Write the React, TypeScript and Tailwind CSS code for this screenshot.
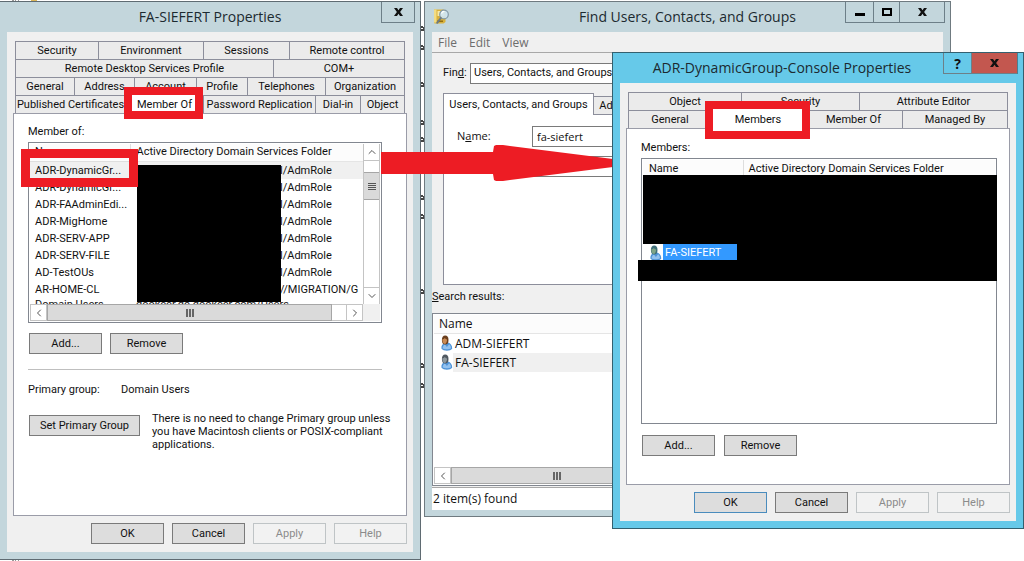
import type { ReactNode } from "react";
import clsx from "clsx";
import { ChevronDown, ChevronLeft, ChevronRight, ChevronUp } from "lucide-react";

const ui = "font-['Roboto','Liberation_Sans',sans-serif] text-[11px]";
const segoe = "font-['Open_Sans','Noto_Sans',sans-serif]";

function CloseGlyph() {
  return (
    <svg width="9" height="8" viewBox="0 0 9 8" aria-hidden="true">
      <path d="M0 0h3l1.5 2.2L6 0h3L6.1 4 9 8H6L4.5 5.8 3 8H0l2.9-4z" fill="#111" />
    </svg>
  );
}

type WindowProps = {
  title: string;
  place: string;
  frame: string;
  lead: ReactNode;
  controls: ReactNode;
  children: ReactNode;
};

function Window({ title, place, frame, lead, controls, children }: WindowProps) {
  return (
    <section aria-label={title} className={clsx("absolute isolate flex flex-col border", frame, place)}>
      <header className="flex h-[30px] items-start">
        {lead}
        <h2 className={clsx(segoe, "flex-1 truncate text-center text-[14px] leading-[30px] text-[#1c2a30]")}>{title}</h2>
        {controls}
      </header>
      <div className="mx-[7px] mb-[7px] flex flex-1 flex-col bg-[#f0f0f0]">{children}</div>
    </section>
  );
}

function Caption({ label, className, children }: { label: string; className: string; children: ReactNode }) {
  return (
    <button aria-label={label} className={clsx("flex h-[21px] items-center justify-center border-b border-l border-[#6d7f88]", className)}>
      {children}
    </button>
  );
}

type Tab = { label: string; width: string; active?: boolean };

function TabRow({ tabs }: { tabs: Tab[] }) {
  return (
    <div className="flex h-[18px] border-r border-[#8c8e9b]">
      {tabs.map((t) => (
        <button
          key={t.label}
          role="tab"
          aria-selected={!!t.active}
          className={clsx(
            "border-l border-t border-[#8c8e9b] text-center leading-[17px] whitespace-nowrap",
            t.width,
            t.active ? "z-10 -mt-0.5 h-[21px] bg-white" : "h-full bg-[#ebebeb]",
          )}
        >
          {t.label}
        </button>
      ))}
    </div>
  );
}

function Button({ children, wide, disabled, primary }: { children: string; wide?: boolean; disabled?: boolean; primary?: boolean }) {
  return (
    <button
      disabled={disabled}
      className={clsx(
        "h-[21px] border text-center leading-[19px]",
        wide ? "w-[111px]" : "w-[73px]",
        disabled ? "border-[#bfc4c6] bg-[#f2f2f2] text-[#8b8b8b]" : primary ? "border-[#4a8cbd] bg-[#dddddd]" : "border-[#7a7a7a] bg-[#dddddd]",
      )}
    >
      {children}
    </button>
  );
}

function DialogButtons({ primary }: { primary?: boolean }) {
  return (
    <div className="mt-[7px] flex justify-end gap-2 pr-1.5">
      <Button primary={primary}>OK</Button>
      <Button>Cancel</Button>
      <Button disabled>Apply</Button>
      <Button disabled>Help</Button>
    </div>
  );
}

function HScroll({ end, thumb }: { end?: boolean; thumb: string }) {
  return (
    <div className="flex h-[17px] bg-white">
      <button aria-label="Scroll left" className="flex w-[17px] items-center justify-center border border-[#c4c4c4] bg-white">
        <ChevronLeft size={12} className="text-[#555]" />
      </button>
      <div className={clsx("flex items-center justify-center gap-px border border-[#a6a6a6] bg-[#dadada]", thumb)}>
        <i className="h-2 w-0.5 bg-[#666]" />
        <i className="h-2 w-0.5 bg-[#666]" />
        <i className="h-2 w-0.5 bg-[#666]" />
      </div>
      <div className="flex-1 border-y border-[#c4c4c4]" />
      <button aria-label="Scroll right" className="flex w-[17px] items-center justify-center border border-[#c4c4c4] bg-white">
        <ChevronRight size={12} className="text-[#555]" />
      </button>
      {end && <div className="w-[17px] bg-[#f0f0f0]" />}
    </div>
  );
}

function UserIcon({ hair, face }: { hair: string; face: string }) {
  return (
    <svg width="13" height="16" viewBox="0 0 13 16" aria-hidden="true" className="shrink-0">
      <path d="M1.500 13.800C1 11 2.400 9 4.200 8.300L8 7.600c2.600.8 4.400 3 4.200 6.200-1 1.300-3 1.900-5.300 1.900s-4.400-.6-5.400-1.900z" fill="#4f94d8" />
      <path d="M2.600 13.300c.2-2 1-3.300 2.300-3.900l2 2.600 2.200-2.800c1.200.8 1.900 2.200 1.900 4.100-2 1.300-6.400 1.400-8.400 0z" fill="#92c1ef" />
      <ellipse cx="5.200" cy="5" rx="3.300" ry="4.500" fill={hair} />
      <path d="M2.300 4.200c.8.2 1.800-.2 2.500-1.200.6.900 1.400 1.400 2.200 1.600.2 1.900-.7 4.300-2.200 4.300S2.200 6.400 2.300 4.200z" fill={face} />
    </svg>
  );
}

function FinderIcon() {
  return (
    <svg width="17" height="17" viewBox="0 0 17 17" aria-hidden="true" className="mt-1.5">
      <path d="M1 1.500h9.500l2 1V14l-2 1.500H1.500L1 14z" fill="#d9b13c" />
      <path d="M1 1.500h2.500v13H1z" fill="#f3dc83" />
      <path d="M4.500 3h7v5h-7z" fill="#f7e9a8" />
      <path d="M4 12.500h6v1.500H4z" fill="#8f6d14" />
      <circle cx="11" cy="6.500" r="4.300" fill="#cfe6f2" fillOpacity=".9" stroke="#8499a5" strokeWidth="1.200" />
      <path d="M8.500 5.500a2.800 2.800 0 0 1 3-2" stroke="#fff" strokeWidth="1.200" fill="none" />
      <path d="M7.800 10L4.200 14.800" stroke="#6d7b84" strokeWidth="2" strokeLinecap="round" />
    </svg>
  );
}

const groups: [string, string][] = [
  ["ADR-DynamicGr...", "l/AdmRole"],
  ["ADR-DynamicGr...", "l/AdmRole"],
  ["ADR-FAAdminEdi...", "l/AdmRole"],
  ["ADR-MigHome", "l/AdmRole"],
  ["ADR-SERV-APP", "l/AdmRole"],
  ["ADR-SERV-FILE", "l/AdmRole"],
  ["AD-TestOUs", "l/AdmRole"],
  ["AR-HOME-CL", "//MIGRATION/G"],
];

function UserProperties() {
  return (
    <Window
      title="FA-SIEFERT Properties"
      place="-left-px top-px h-[559px] w-[422px]"
      frame="border-[#5f6b72] bg-[#c3d6dc]"
      lead={<div className="w-[39px]" />}
      controls={
        <Caption label="Close" className="mr-[5px] w-[34px] border-r">
          <CloseGlyph />
        </Caption>
      }
    >
      <div className={clsx(ui, "flex flex-1 flex-col")}>
        <div role="tablist" className="mx-2 mt-[9px]">
          <TabRow
            tabs={[
              { label: "Security", width: "w-[83px]" },
              { label: "Environment", width: "w-[105px]" },
              { label: "Sessions", width: "w-[86px]" },
              { label: "Remote control", width: "flex-1" },
            ]}
          />
          <TabRow
            tabs={[
              { label: "Remote Desktop Services Profile", width: "w-[258px]" },
              { label: "COM+", width: "flex-1" },
            ]}
          />
          <TabRow
            tabs={[
              { label: "General", width: "w-[59px]" },
              { label: "Address", width: "w-[60px]" },
              { label: "Account", width: "w-[62px]" },
              { label: "Profile", width: "w-[51px]" },
              { label: "Telephones", width: "w-[78px]" },
              { label: "Organization", width: "flex-1" },
            ]}
          />
          <TabRow
            tabs={[
              { label: "Published Certificates", width: "w-[110px]" },
              { label: "Member Of", width: "w-[78px]", active: true },
              { label: "Password Replication", width: "w-[112px]" },
              { label: "Dial-in", width: "w-[45px]" },
              { label: "Object", width: "flex-1" },
            ]}
          />
        </div>
        <div className="mx-1.5 flex h-[403px] flex-col border border-[#9a9ca8] bg-white pl-3.5 pr-6">
          <p className="mt-2.5 mb-0.5 leading-[16px]">Member of:</p>
          <div className="relative flex h-[181px] flex-col border border-[#828790] p-px">
            <div className="flex min-h-0 flex-1">
              <div className="min-w-0 flex-1 overflow-hidden">
                <table className="w-full table-fixed border-collapse text-left">
                  <thead>
                    <tr className="h-[17px] bg-[#fcfcfc] leading-[16px]">
                      <th className="w-[100px] border-r border-b border-[#dedede] p-0 pl-[5px] font-normal">Name</th>
                      <th className="overflow-hidden border-b border-[#e5e5e5] p-0 pl-1.5 font-normal whitespace-nowrap">Active Directory Domain Services Folder</th>
                    </tr>
                  </thead>
                  <tbody>
                    {groups.map(([name, folder], i) => (
                      <tr key={i} className={clsx("h-[17px] leading-[17px]", i === 0 && "bg-[#f0f0f0]")}>
                        <td className="p-0 pl-[5px] whitespace-nowrap">{name}</td>
                        <td className="overflow-hidden p-0 pl-[150px] whitespace-nowrap">{folder}</td>
                      </tr>
                    ))}
                    <tr className="h-[17px] leading-[14px]">
                      <td className="p-0 pl-[5px] align-top">Domain Users</td>
                      <td className="p-0 pl-1.5 align-top whitespace-nowrap">dookeer.dc.dookeer.com/Users</td>
                    </tr>
                  </tbody>
                </table>
              </div>
              <div className="flex w-[17px] flex-col border-x border-[#c4c4c4]">
                <button aria-label="Scroll up" className="flex h-[17px] items-center justify-center border-b border-[#c4c4c4]">
                  <ChevronUp size={12} className="text-[#555]" />
                </button>
                <div className="mt-[11px] flex h-7 flex-col items-center justify-center gap-px border-y border-[#a6a6a6] bg-[#dadada]">
                  <i className="h-px w-2 bg-[#555]" />
                  <i className="h-px w-2 bg-[#555]" />
                  <i className="h-px w-2 bg-[#555]" />
                  <i className="h-px w-2 bg-[#555]" />
                </div>
                <div className="flex-1" />
                <button aria-label="Scroll down" className="flex h-[17px] items-center justify-center border-t border-[#c4c4c4]">
                  <ChevronDown size={12} className="text-[#555]" />
                </button>
              </div>
            </div>
            <HScroll end thumb="w-[285px]" />
            <div className="absolute top-[22px] left-[108px] h-[137px] w-[144px] bg-black" />
          </div>
          <div className="mt-2.5 flex gap-2 pl-px">
            <Button>Add...</Button>
            <Button>Remove</Button>
          </div>
          <hr className="mt-[15px] border-[#bfbfbf]" />
          <div className="mt-3 flex leading-[16px]">
            <span className="w-[93px]">Primary group:</span>
            <span>Domain Users</span>
          </div>
          <div className="mt-3.5 flex items-start gap-3 pl-px">
            <div className="mt-[3px]">
              <Button wide>Set Primary Group</Button>
            </div>
            <p className="leading-[13px] whitespace-nowrap">
              There is no need to change Primary group unless
              <br />
              you have Macintosh clients or POSIX-compliant
              <br />
              applications.
            </p>
          </div>
        </div>
        <DialogButtons />
      </div>
    </Window>
  );
}

function FindDialog() {
  return (
    <Window
      title="Find Users, Contacts, and Groups"
      place="left-[424px] top-px h-[516px] w-[527px]"
      frame="border-[#6f7a80] bg-[#c3d6dc]"
      lead={
        <div className="w-[105px] pl-2">
          <FinderIcon />
        </div>
      }
      controls={
        <div className="mr-[5px] flex border-r border-[#6d7f88]">
          <Caption label="Minimize" className="w-7">
            <i className="mt-1 h-[3px] w-2.5 bg-black" />
          </Caption>
          <Caption label="Maximize" className="w-[26px]">
            <i className="h-2 w-2.5 border-2 border-black" />
          </Caption>
          <Caption label="Close" className="w-[45px]">
            <CloseGlyph />
          </Caption>
        </div>
      }
    >
      <nav className={clsx(segoe, "flex h-[21px] gap-3 border-b border-[#a8a8a8] pl-1.5 text-[12px] leading-[19px] text-[#6d6d6d]")}>
        <button>File</button>
        <button>Edit</button>
        <button>View</button>
      </nav>
      <div className={clsx(ui, "mx-[11px] mt-2.5 flex items-center")}>
        <label htmlFor="scope" className="w-[27px]">
          Fin<u>d</u>:
        </label>
        <select id="scope" className="h-[21px] flex-1 appearance-none border border-[#7a7a7a] bg-white pl-[3px]">
          <option>Users, Contacts, and Groups</option>
        </select>
      </div>
      <div className={clsx(ui, "mx-[11px] mt-[9px]")}>
        <div role="tablist" className="flex items-end">
          <button role="tab" aria-selected="true" className="z-10 -mb-px h-[22px] w-[151px] border border-b-0 border-[#8c8e9b] bg-white leading-[20px]">
            Users, Contacts, and Groups
          </button>
          <button role="tab" aria-selected="false" className="h-[18px] w-[60px] border border-b-0 border-l-0 border-[#8c8e9b] bg-[#ebebeb] leading-[18px]">
            Advanced
          </button>
        </div>
        <div className={clsx(segoe, "flex h-[171px] flex-col gap-[9px] border border-[#8c8e9b] bg-white px-[13px] pt-[11px]")}>
          <div className="flex items-center">
            <label htmlFor="name" className="w-[75px]">
              N<u>a</u>me:
            </label>
            <input id="name" defaultValue="fa-siefert" className="h-[21px] flex-1 border border-[#7a7a7a] pl-1 text-[11px]" />
          </div>
          <input aria-label="Description" className="ml-[75px] h-[21px] border border-[#7a7a7a]" />
        </div>
      </div>
      <p className={clsx(ui, "mt-1 leading-[16px]")}>
        <u>S</u>earch results:
      </p>
      <div className={clsx(segoe, "mt-2 flex h-[173px] flex-col border border-[#828790] bg-white p-px text-[12px]")}>
        <table className="w-full border-collapse text-left">
          <thead>
            <tr className="h-[18px] bg-[#fcfcfc]">
              <th className="border-b border-[#e5e5e5] p-0 pl-[5px] leading-[17px] font-normal">Name</th>
            </tr>
          </thead>
          <tbody>
            <tr className="h-[19px]">
              <td className="p-0 pl-1.5 leading-[19px]">
                <div className="flex h-[19px] items-center">
                  <UserIcon hair="#6b3f1d" face="#c98b55" />
                  <span className="flex-1 pl-0.5">ADM-SIEFERT</span>
                </div>
              </td>
            </tr>
            <tr className="h-[19px]">
              <td className="p-0 pl-1.5 leading-[19px]">
                <div className="flex h-[19px] items-center">
                  <UserIcon hair="#4f5860" face="#8e999f" />
                  <span className="flex-1 bg-[#f0f0f0] pl-0.5">FA-SIEFERT</span>
                </div>
              </td>
            </tr>
          </tbody>
        </table>
        <div className="flex-1" />
        <HScroll thumb="w-[211px]" />
      </div>
      <footer className={clsx(segoe, "mt-px flex-1 border-t border-[#a8a8a8] bg-white pl-px text-[12px] leading-[22px]")}>2 item(s) found</footer>
    </Window>
  );
}

function GroupProperties() {
  return (
    <Window
      title="ADR-DynamicGroup-Console Properties"
      place="left-[612px] top-[52px] h-[477px] w-[412px]"
      frame="border-[#33606f] bg-[#66c9e9]"
      lead={<div className="w-2" />}
      controls={
        <div className="mr-[5px] flex border-r border-[#4b7f90]">
          <Caption label="Help" className="w-7">
            <span className={clsx(segoe, "text-[14px] font-bold")}>?</span>
          </Caption>
          <Caption label="Close" className="w-[46px] bg-[#c3574f]">
            <CloseGlyph />
          </Caption>
        </div>
      }
    >
      <div className={clsx(ui, "flex flex-1 flex-col")}>
        <div role="tablist" className="mx-2 mt-[9px]">
          <TabRow
            tabs={[
              { label: "Object", width: "w-[113px]" },
              { label: "Security", width: "w-[118px]" },
              { label: "Attribute Editor", width: "flex-1" },
            ]}
          />
          <TabRow
            tabs={[
              { label: "General", width: "w-[83px]" },
              { label: "Members", width: "w-[93px]", active: true },
              { label: "Member Of", width: "w-[98px]" },
              { label: "Managed By", width: "flex-1" },
            ]}
          />
        </div>
        <div className="mx-1.5 flex h-[357px] flex-col border border-[#9a9ca8] bg-white pl-3.5 pr-3">
          <p className="mt-[11px] mb-0.5 leading-[16px]">Members:</p>
          <div className="relative h-[266px] border border-[#828790] p-px">
            <table className="w-full table-fixed border-collapse text-left">
              <thead>
                <tr className="h-[16px] bg-[#fcfcfc] leading-[18px]">
                  <th className="h-[16px] w-[100px] border-r border-[#dedede] p-0 pl-1.5 font-normal">Name</th>
                  <th className="h-[16px] p-0 pl-[5px] font-normal">Active Directory Domain Services Folder</th>
                </tr>
              </thead>
              <tbody>
                <tr>
                  <td colSpan={2} className="p-0 pt-[66px] pl-1.5">
                    <div className="flex h-[17px] items-center">
                      <UserIcon hair="#3f6f7a" face="#7fa588" />
                      <span className="ml-px w-[74px] bg-[#3399ff] pl-0.5 leading-[17px] text-white">FA-SIEFERT</span>
                    </div>
                  </td>
                </tr>
              </tbody>
            </table>
            <div className="absolute top-4 -right-px left-px h-[69px] bg-black" />
            <div className="absolute top-[85px] -right-px left-[95px] h-4 bg-black" />
            <div className="absolute top-[101px] -right-px -left-1 h-[21px] bg-black" />
          </div>
          <div className="mt-[11px] flex gap-[9px] pl-px">
            <Button>Add...</Button>
            <Button>Remove</Button>
          </div>
        </div>
        <DialogButtons primary />
      </div>
    </Window>
  );
}

export default function App() {
  return (
    <main className="relative h-screen min-h-[561px] overflow-hidden bg-white text-[#111]">
      <svg className="absolute top-0 left-0" width="430" height="561" aria-hidden="true">
        <path d="M12 0h2v1h-2zM15 0h1v1h-1zM18 0h1v1h-1zM12 560h2v1h-2zM15 560h1v1h-1zM18 560h1v1h-1z" fill="#999" />
        <path d="M31 0h6v1h-6z" fill="#dcb75a" />
        {[26, 45, 82, 120, 137, 195, 214, 289, 363, 383].map((y) => (
          <path key={y} d={`M421 ${y}h2v1h1v4h-3v-2h2v-1h-2z`} fill="#444" />
        ))}
      </svg>
      <UserProperties />
      <FindDialog />
      <svg className="absolute top-[140px] left-[380px]" width="240" height="46" aria-hidden="true">
        <path d="M1 12H113L114 6 116 5H123L233 19V27L123 41H116L114 40 113 34H1z" fill="#ed1c24" />
      </svg>
      <GroupProperties />
      <div className="absolute top-[87px] left-[124px] h-8 w-[79px] border-8 border-[#ed1c24]" />
      <div className="absolute top-[149px] left-[21px] h-[38px] w-[117px] border-9 border-[#ed1c24]" />
      <div className="absolute top-[101px] left-[705px] h-[38px] w-[105px] border-8 border-[#ed1c24]" />
    </main>
  );
}
